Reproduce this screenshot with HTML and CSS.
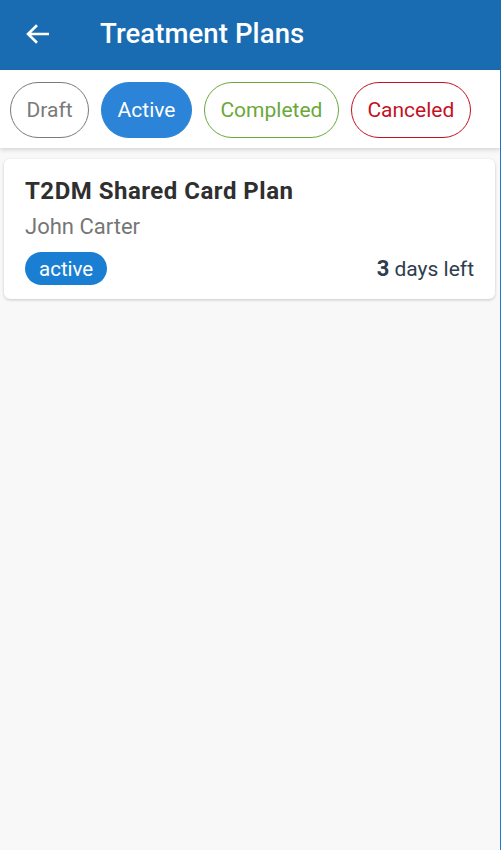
FILE: index.html
```html
<!DOCTYPE html>
<html>
<head>
<meta charset="utf-8">
<link rel="stylesheet" href="styles.css">
</head>
<body>
<div class="app">
  <header class="appbar">
    <button class="back" aria-label="Back">
      <svg width="24" height="20" viewBox="0 0 24 20"><path d="M2 10H23M11 1.2L2 10L11 18.8" fill="none" stroke="#fff" stroke-width="2.6"/></svg>
    </button>
    <h1 class="title">Treatment Plans</h1>
  </header>
  <nav class="filters">
    <span class="chip chip-draft">Draft</span>
    <span class="chip chip-active">Active</span>
    <span class="chip chip-completed">Completed</span>
    <span class="chip chip-canceled">Canceled</span>
  </nav>
  <main class="list">
    <article class="card">
      <h2 class="card-title">T2DM Shared Card Plan</h2>
      <div class="card-patient">John Carter</div>
      <div class="card-foot">
        <span class="badge">active</span>
        <span class="days"><b>3</b> days left</span>
      </div>
    </article>
  </main>
</div>
</body>
</html>
```
FILE: styles.css
```css
* { box-sizing: border-box; }
html, body { margin: 0; padding: 0; height: 100%; }
body {
  font-family: Roboto, "Noto Sans", sans-serif;
  background: #f8f8f8;
}
.app {
  min-height: 850px;
  border-right: 1px solid #1d7ad0;
  display: flex;
  flex-direction: column;
}
.appbar {
  height: 70px;
  background: #1a6cb2;
  display: flex;
  align-items: center;
  padding-left: 26px;
  margin-right: -1px;
}
.back {
  background: none;
  border: 0;
  padding: 0;
  width: 24px;
  height: 20px;
  display: flex;
  margin-top: -3px;
}
.back svg { display: block; }
.title {
  margin: 0 0 0 50px;
  color: #fff;
  font-size: 27.5px;
  font-weight: 500;
  letter-spacing: 0.1px;
  line-height: 32px;
  margin-top: -3px;
}
.filters {
  height: 78px;
  background: #fff;
  display: flex;
  align-items: center;
  gap: 12px;
  padding: 0 10px;
  box-shadow: 0 2px 4px rgba(0,0,0,0.14);
  position: relative;
}
.chip {
  height: 56px;
  border-radius: 28px;
  border: 1px solid;
  display: inline-flex;
  align-items: center;
  padding: 0 15.5px;
  font-size: 21px;
  margin-top: 1px;
}
.chip-draft { color: #7a7a7a; border-color: #7a7a7a; }
.chip-active { background: #2b84d8; border-color: #2b84d8; color: #fff; }
.chip-completed { color: #6aa83a; border-color: #6aa83a; }
.chip-canceled { color: #c3111f; border-color: #c3111f; }
.list {
  padding: 11px 5px 0 4px;
}
.card {
  background: #fff;
  border-radius: 6px;
  box-shadow: 0 1px 3px rgba(0,0,0,0.2);
  padding: 18px 21px 14px 21px;
  height: 140px;
}
.card-title {
  margin: 0;
  font-size: 24px;
  font-weight: 700;
  color: #2f2f2f;
  line-height: 28px;
  letter-spacing: 0.5px;
}
.card-patient {
  margin-top: 9px;
  font-size: 22px;
  color: #767676;
  line-height: 26px;
}
.card-foot {
  margin-top: 12px;
  display: flex;
  align-items: center;
  justify-content: space-between;
}
.badge {
  background: #1a7fd2;
  color: #fff;
  font-size: 20.5px;
  height: 33px;
  border-radius: 17px;
  display: inline-flex;
  align-items: center;
  padding: 0 14px;
}
.days {
  font-size: 21px;
  color: #2e3d4e;
}
.days b { font-weight: 700; font-size: 22px; }
```
